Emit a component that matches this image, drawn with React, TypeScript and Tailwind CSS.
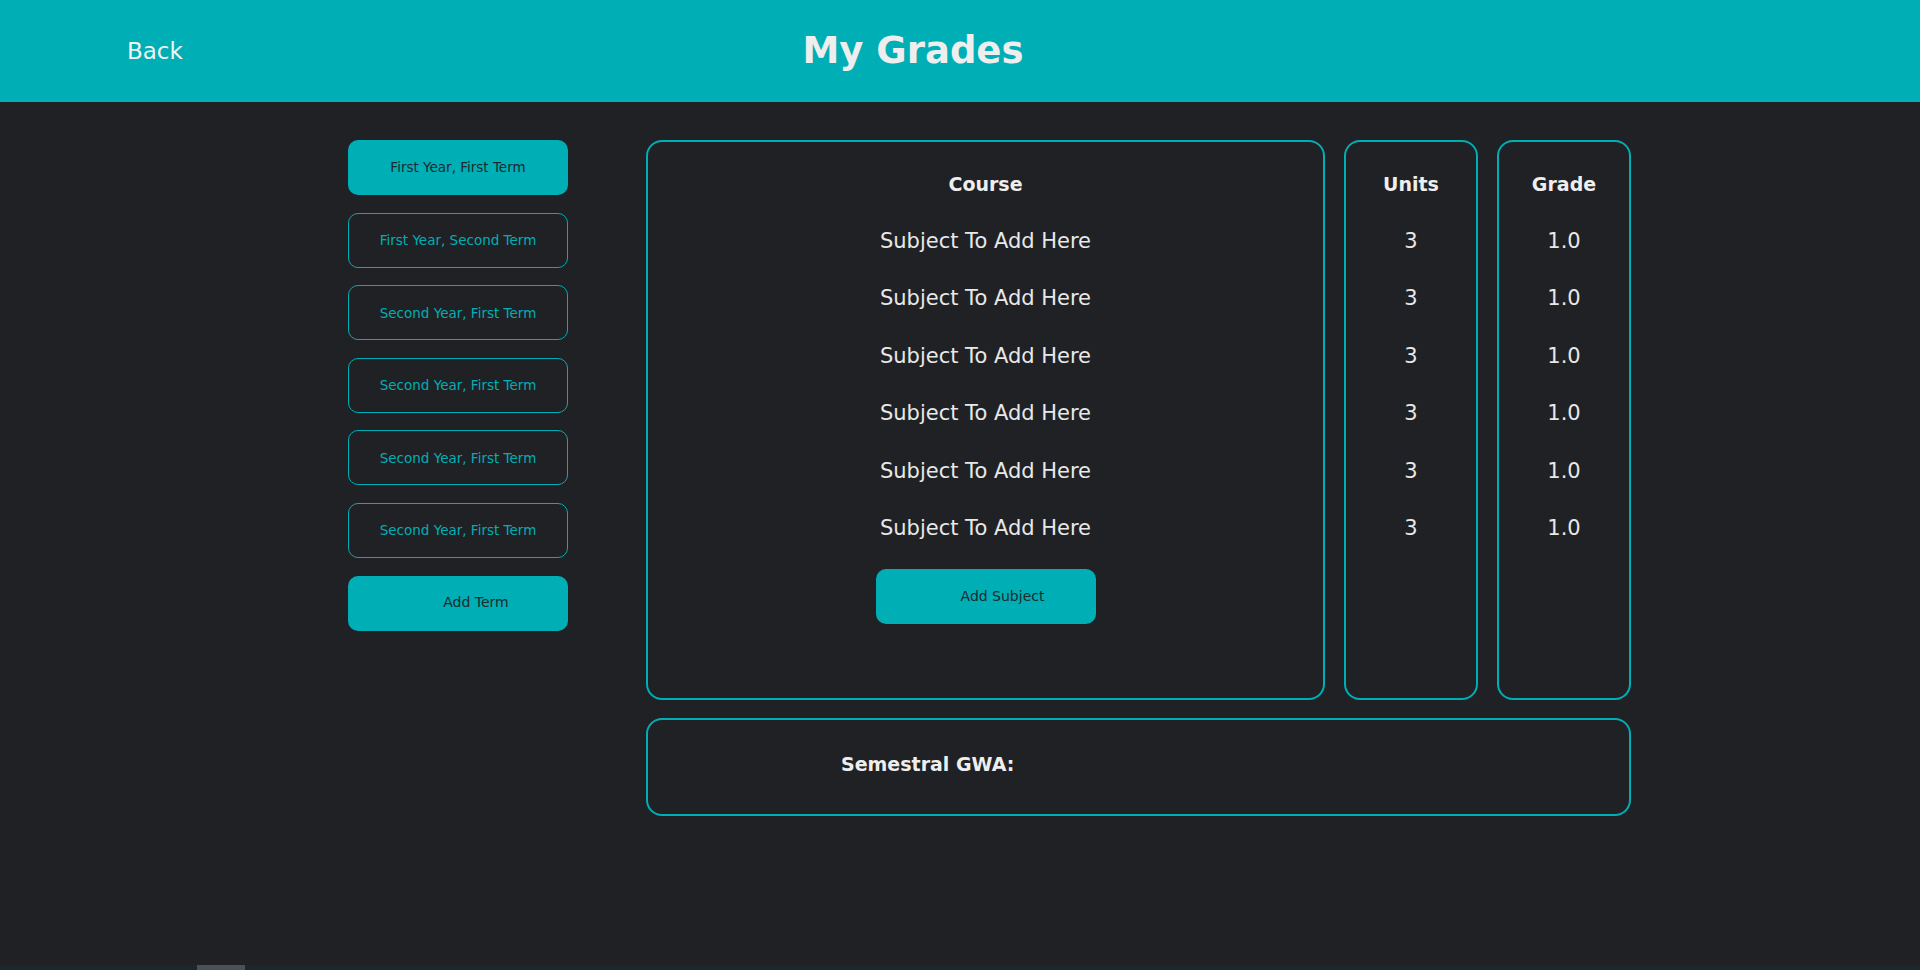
import React from 'react';

const TERMS = [
  'First Year, Second Term',
  'Second Year, First Term',
  'Second Year, First Term',
  'Second Year, First Term',
  'Second Year, First Term',
];

const ROWS = Array.from({ length: 6 }, () => ({ course: 'Subject To Add Here', units: '3', grade: '1.0' }));

export default function App() {
  return (
    <div className="h-screen flex flex-col bg-[#202124] font-['DejaVu_Sans',sans-serif] text-[#eeeeee] overflow-hidden">
      {/* HEADER */}
      <header className="h-[102px] shrink-0 bg-[#00aeb5] flex items-center">
        <div className="w-[290px] pl-[127px]">
          <button className="text-[23px] text-[#f2f2f2]">Back</button>
        </div>
        <div className="w-[1246px] text-center">
          <h1 className="text-[37px] font-bold text-[#eeeeee]">My Grades</h1>
        </div>
      </header>

      <div className="flex-1 flex pt-[38px] pl-[348px] gap-[78px]">
        {/* TERMS SIDEBAR */}
        <aside className="w-[220px] flex flex-col gap-[17.6px]">
          <button className="h-[55px] rounded-[10px] bg-[#00aeb5] text-[13.5px] text-[#1d2a2e]">First Year, First Term</button>
          {TERMS.map((t, i) => (
            <button key={i} className="h-[55px] rounded-[10px] border border-[#00aeb5] text-[13.5px] text-[#00aeb5]">{t}</button>
          ))}
          <button className="h-[55px] rounded-[10px] bg-[#00aeb5] pl-[36px] pb-[2px] text-[14px] text-[#1d2a2e]">Add Term</button>
        </aside>

        {/* GRADES TABLE */}
        <main className="w-[985px] flex flex-col gap-[18px]">
          <div className="flex gap-[19px]">
            <div className="w-[679px] h-[560px] border-2 border-[#00aeb5] rounded-[16px] pt-[14px] flex flex-col">
              <div className="h-[57px] flex items-center justify-center text-[19px] font-bold">Course</div>
              {ROWS.map((r, i) => (
                <div key={i} className="h-[57.4px] flex items-center justify-center text-[21px] text-[#e8e8e8]">{r.course}</div>
              ))}
              <button className="mt-[12px] mx-auto w-[220px] h-[55px] rounded-[10px] bg-[#00aeb5] pl-[34px] text-[14px] text-[#1d2a2e]">Add Subject</button>
            </div>

            <div className="w-[134px] h-[560px] border-2 border-[#00aeb5] rounded-[16px] pt-[14px] flex flex-col">
              <div className="h-[57px] flex items-center justify-center text-[19px] font-bold">Units</div>
              {ROWS.map((r, i) => (
                <div key={i} className="h-[57.4px] flex items-center justify-center text-[21px] text-[#e8e8e8]">{r.units}</div>
              ))}
            </div>

            <div className="w-[134px] h-[560px] border-2 border-[#00aeb5] rounded-[16px] pt-[14px] flex flex-col">
              <div className="h-[57px] flex items-center justify-center text-[19px] font-bold">Grade</div>
              {ROWS.map((r, i) => (
                <div key={i} className="h-[57.4px] flex items-center justify-center text-[21px] text-[#e8e8e8]">{r.grade}</div>
              ))}
            </div>
          </div>

          <div className="h-[98px] border-2 border-[#00aeb5] rounded-[16px] flex items-center pl-[193px] pb-[5px]">
            <span className="text-[19px] font-bold">Semestral GWA:</span>
          </div>
        </main>
      </div>

      {/* bottom scroll strip */}
      <div className="h-[5px] shrink-0 bg-[#1a272c] flex">
        <div className="ml-[197px] w-[48px] bg-[#4b5157]" />
      </div>
    </div>
  );
}
